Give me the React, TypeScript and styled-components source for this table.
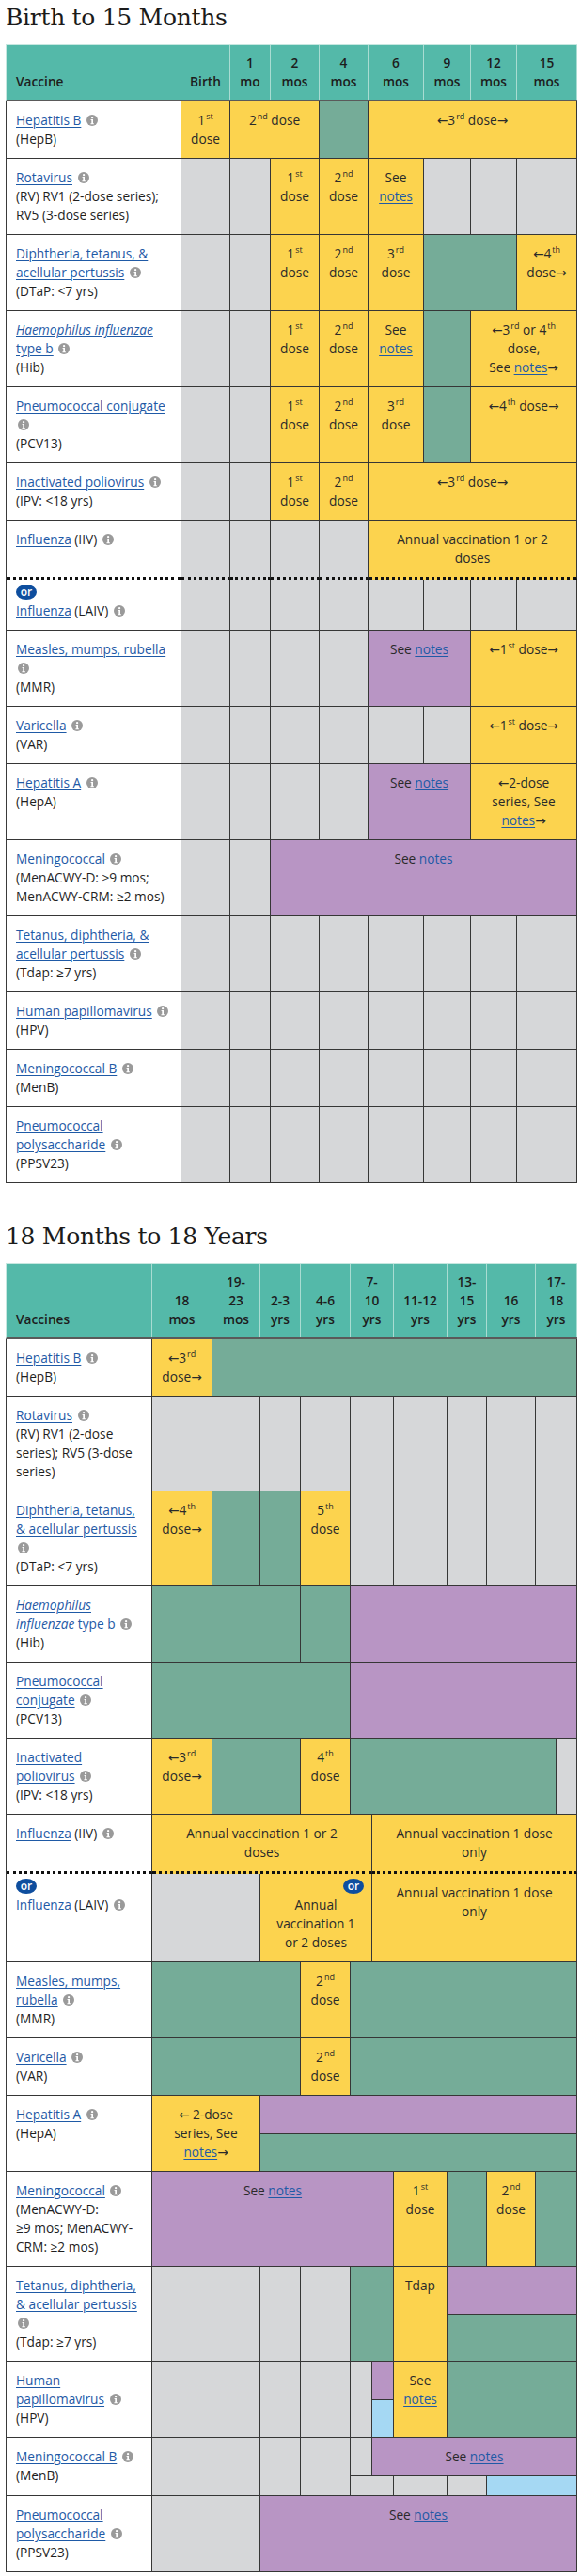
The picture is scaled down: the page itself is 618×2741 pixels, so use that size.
import React from "react";
import styled, { createGlobalStyle, css } from "styled-components";

const GlobalStyle = createGlobalStyle`
  html, body { margin: 0; padding: 0; background: #ffffff; }
  body {
    font-family: "Open Sans", "Noto Sans", "DejaVu Sans", sans-serif;
    color: #262626;
  }
  * { box-sizing: border-box; }
`;

type Tone = "white" | "yellow" | "green" | "purple" | "gray" | "blue";

const toneColor: Record<Tone, string> = {
  white: "#ffffff",
  yellow: "#fcd34e",
  green: "#75ac98",
  purple: "#b895c4",
  gray: "#d6d7d9",
  blue: "#a5d8f3",
};

const Page = styled.main`
  width: 618px;
  padding: 0 5px 8px 6px;
`;

const Section = styled.section`
  & + & {
    margin-top: 38px;
  }
`;

const Title = styled.h2`
  margin: 0 0 13px;
  padding-top: 4px;
  font-family: "DejaVu Serif", "Liberation Serif", serif;
  font-weight: 400;
  font-size: 25px;
  line-height: 30px;
  letter-spacing: -0.3px;
  color: #1b1b1b;
`;

const Table = styled.div`
  width: 608px;
  font-size: 13.7px;
  line-height: 20px;
`;

const HeadGrid = styled.div<{ $cols: string }>`
  display: grid;
  grid-template-columns: ${(p) => p.$cols};
  background: #54b9a9;
  border-top: 1px solid #c6e7e0;
  border-left: 1px solid #c6e7e0;
  border-bottom: 2px solid #5a5a5a;
`;

const HeadCell = styled.div<{ $span?: number; $left?: boolean }>`
  grid-column: span ${(p) => p.$span ?? 1};
  display: flex;
  flex-direction: column;
  justify-content: flex-end;
  padding: 9px 3px;
  text-align: center;
  font-weight: 600;
  color: #1d1d1d;
  border-right: 1px solid #a9dcd2;
  min-width: 0;
  ${(p) =>
    p.$left &&
    css`
      text-align: left;
      padding-left: 10px;
    `}
`;

const BodyGrid = styled.div<{ $cols: string }>`
  display: grid;
  grid-template-columns: ${(p) => p.$cols};
  border-left: 1px solid #3a3a3a;
`;

const Cell = styled.div<{ $tone: Tone; $span?: number; $dotted?: boolean; $tight?: boolean }>`
  grid-column: span ${(p) => p.$span ?? 1};
  min-width: 0;
  background: ${(p) => toneColor[p.$tone]};
  border-right: 1px solid #363636;
  border-bottom: ${(p) => (p.$dotted ? "3px dotted #111111" : "1px solid #363636")};
  padding: ${(p) => (p.$tight ? "3px" : "10px")} 7px 10px;
  text-align: center;
  color: #2a2a2a;
`;

const VaccineCell = styled(Cell)`
  text-align: left;
  padding-left: 10px;
  padding-right: 10px;
  color: #1f1f1f;
`;

const Split = styled.div<{ $span: number }>`
  grid-column: span ${(p) => p.$span};
  display: flex;
  flex-direction: column;
  min-width: 0;
`;

const SubRow = styled.div<{ $cols?: string; $grow?: number }>`
  display: grid;
  grid-template-columns: ${(p) => p.$cols ?? "1fr"};
  flex: ${(p) => p.$grow ?? 1} 1 0;
`;

const Sup = styled.sup`
  font-size: 9px;
  line-height: 0;
  vertical-align: 6px;
  margin-left: 1px;
`;

const Link = styled.a`
  color: #1f5aa6;
  text-decoration: underline;
  text-underline-offset: 2px;
  text-decoration-thickness: 1px;
`;

const Em = styled.em`
  font-style: italic;
`;

const InfoWrap = styled.span`
  display: inline-block;
  width: 12px;
  height: 12px;
  margin-left: 2px;
  vertical-align: -1px;

  svg {
    display: block;
  }
`;

const BadgeLine = styled.div<{ $right?: boolean }>`
  height: 20px;
  display: flex;
  align-items: center;
  justify-content: ${(p) => (p.$right ? "flex-end" : "flex-start")};
  padding-right: ${(p) => (p.$right ? "1px" : "0")};
`;

const OrBadge = styled.span`
  display: inline-flex;
  align-items: center;
  justify-content: center;
  width: 22px;
  height: 16px;
  border-radius: 50%;
  background: #0e4e9e;
  color: #ffffff;
  font-size: 12px;
  font-weight: 600;
  line-height: 1;
  padding-bottom: 1px;
`;

const InfoIcon = () => (
  <InfoWrap>
    <svg width="12" height="12" viewBox="0 0 12 12" aria-hidden="true">
      <circle cx="6" cy="6" r="6" fill="#9a9a9a" />
      <circle cx="6.1" cy="3.2" r="1.15" fill="#ffffff" />
      <path d="M4.6 5.1h2.4v4.2h0.9v0.9H4.4V9.3h0.9V6H4.6z" fill="#ffffff" />
    </svg>
  </InfoWrap>
);

const Ord = ({ n, s }: { n: string; s: string }) => (
  <>
    {n}
    <Sup>{s}</Sup>
  </>
);

const Notes = () => <Link href="#">notes</Link>;

const SeeNotes = () => (
  <>
    See <Notes />
  </>
);

type NameProps = {
  label: React.ReactNode;
  after?: string;
  abbr?: string;
  or?: boolean;
};

const Name = ({ label, after, abbr, or }: NameProps) => (
  <>
    {or && (
      <BadgeLine>
        <OrBadge>or</OrBadge>
      </BadgeLine>
    )}
    <Link href="#">{label}</Link>
    {after}{" "}
    <InfoIcon />
    {abbr && (
      <>
        <br />
        {abbr}
      </>
    )}
  </>
);

const Grays = ({ n }: { n: number }) => (
  <>
    {Array.from({ length: n }).map((_, i) => (
      <Cell key={i} $tone="gray" />
    ))}
  </>
);

const Hib = (
  <>
    <Em>Haemophilus influenzae</Em> type b
  </>
);

const MEN_ABBR = "(MenACWY-D: ≥9\u00a0mos; MenACWY-CRM: ≥2\u00a0mos)";

/* ---------------- Birth to 15 months ---------------- */

const T1 = "186px 52px 43px 52px 52px 59px 50px 49px 64px";

const EarlyTable = () => (
  <Table>
    <HeadGrid $cols={T1}>
      <HeadCell $left>Vaccine</HeadCell>
      <HeadCell>Birth</HeadCell>
      <HeadCell>1<br />mo</HeadCell>
      <HeadCell>2<br />mos</HeadCell>
      <HeadCell>4<br />mos</HeadCell>
      <HeadCell>6<br />mos</HeadCell>
      <HeadCell>9<br />mos</HeadCell>
      <HeadCell>12<br />mos</HeadCell>
      <HeadCell>15<br />mos</HeadCell>
    </HeadGrid>
    <BodyGrid $cols={T1}>
      {/* Hepatitis B */}
      <VaccineCell $tone="white"><Name label="Hepatitis B" abbr="(HepB)" /></VaccineCell>
      <Cell $tone="yellow"><Ord n="1" s="st" /> dose</Cell>
      <Cell $tone="yellow" $span={2}><Ord n="2" s="nd" /> dose</Cell>
      <Cell $tone="green" />
      <Cell $tone="yellow" $span={4}>←<Ord n="3" s="rd" /> dose→</Cell>

      {/* Rotavirus */}
      <VaccineCell $tone="white"><Name label="Rotavirus" abbr="(RV) RV1 (2-dose series); RV5 (3-dose series)" /></VaccineCell>
      <Grays n={2} />
      <Cell $tone="yellow"><Ord n="1" s="st" /> dose</Cell>
      <Cell $tone="yellow"><Ord n="2" s="nd" /> dose</Cell>
      <Cell $tone="yellow"><SeeNotes /></Cell>
      <Grays n={3} />

      {/* DTaP */}
      <VaccineCell $tone="white"><Name label="Diphtheria, tetanus, & acellular pertussis" abbr="(DTaP: <7 yrs)" /></VaccineCell>
      <Grays n={2} />
      <Cell $tone="yellow"><Ord n="1" s="st" /> dose</Cell>
      <Cell $tone="yellow"><Ord n="2" s="nd" /> dose</Cell>
      <Cell $tone="yellow"><Ord n="3" s="rd" /> dose</Cell>
      <Cell $tone="green" $span={2} />
      <Cell $tone="yellow">←<Ord n="4" s="th" /> dose→</Cell>

      {/* Hib */}
      <VaccineCell $tone="white"><Name label={Hib} abbr="(Hib)" /></VaccineCell>
      <Grays n={2} />
      <Cell $tone="yellow"><Ord n="1" s="st" /> dose</Cell>
      <Cell $tone="yellow"><Ord n="2" s="nd" /> dose</Cell>
      <Cell $tone="yellow"><SeeNotes /></Cell>
      <Cell $tone="green" />
      <Cell $tone="yellow" $span={2}>
        ←<Ord n="3" s="rd" /> or <Ord n="4" s="th" /> dose,
        <br />
        See <Notes />→
      </Cell>

      {/* PCV13 */}
      <VaccineCell $tone="white"><Name label="Pneumococcal conjugate" abbr="(PCV13)" /></VaccineCell>
      <Grays n={2} />
      <Cell $tone="yellow"><Ord n="1" s="st" /> dose</Cell>
      <Cell $tone="yellow"><Ord n="2" s="nd" /> dose</Cell>
      <Cell $tone="yellow"><Ord n="3" s="rd" /> dose</Cell>
      <Cell $tone="green" />
      <Cell $tone="yellow" $span={2}>←<Ord n="4" s="th" /> dose→</Cell>

      {/* IPV */}
      <VaccineCell $tone="white"><Name label="Inactivated poliovirus" abbr="(IPV: <18 yrs)" /></VaccineCell>
      <Grays n={2} />
      <Cell $tone="yellow"><Ord n="1" s="st" /> dose</Cell>
      <Cell $tone="yellow"><Ord n="2" s="nd" /> dose</Cell>
      <Cell $tone="yellow" $span={4}>←<Ord n="3" s="rd" /> dose→</Cell>

      {/* Influenza IIV */}
      <VaccineCell $tone="white" $dotted><Name label="Influenza" after=" (IIV)" /></VaccineCell>
      <Cell $tone="gray" $dotted />
      <Cell $tone="gray" $dotted />
      <Cell $tone="gray" $dotted />
      <Cell $tone="gray" $dotted />
      <Cell $tone="yellow" $span={4} $dotted>Annual vaccination 1 or 2<br />doses</Cell>

      {/* Influenza LAIV */}
      <VaccineCell $tone="white" $tight><Name label="Influenza" after=" (LAIV)" or /></VaccineCell>
      <Grays n={8} />

      {/* MMR */}
      <VaccineCell $tone="white"><Name label="Measles, mumps, rubella" abbr="(MMR)" /></VaccineCell>
      <Grays n={4} />
      <Cell $tone="purple" $span={2}><SeeNotes /></Cell>
      <Cell $tone="yellow" $span={2}>←<Ord n="1" s="st" /> dose→</Cell>

      {/* Varicella */}
      <VaccineCell $tone="white"><Name label="Varicella" abbr="(VAR)" /></VaccineCell>
      <Grays n={6} />
      <Cell $tone="yellow" $span={2}>←<Ord n="1" s="st" /> dose→</Cell>

      {/* Hepatitis A */}
      <VaccineCell $tone="white"><Name label="Hepatitis A" abbr="(HepA)" /></VaccineCell>
      <Grays n={4} />
      <Cell $tone="purple" $span={2}><SeeNotes /></Cell>
      <Cell $tone="yellow" $span={2}>←2-dose series, See <Notes />→</Cell>

      {/* Meningococcal */}
      <VaccineCell $tone="white"><Name label="Meningococcal" abbr={MEN_ABBR} /></VaccineCell>
      <Grays n={2} />
      <Cell $tone="purple" $span={6}><SeeNotes /></Cell>

      {/* Tdap */}
      <VaccineCell $tone="white"><Name label="Tetanus, diphtheria, & acellular pertussis" abbr="(Tdap: ≥7 yrs)" /></VaccineCell>
      <Grays n={8} />

      {/* HPV */}
      <VaccineCell $tone="white"><Name label="Human papillomavirus" abbr="(HPV)" /></VaccineCell>
      <Grays n={8} />

      {/* MenB */}
      <VaccineCell $tone="white"><Name label="Meningococcal B" abbr="(MenB)" /></VaccineCell>
      <Grays n={8} />

      {/* PPSV23 */}
      <VaccineCell $tone="white"><Name label="Pneumococcal polysaccharide" abbr="(PPSV23)" /></VaccineCell>
      <Grays n={8} />
    </BodyGrid>
  </Table>
);

/* ---------------- 18 months to 18 years ---------------- */

const T2 = "155px 64px 51px 43px 53px 23px 23px 57px 42px 52px 22px 22px";

const LaterTable = () => (
  <Table>
    <HeadGrid $cols={T2}>
      <HeadCell $left>Vaccines</HeadCell>
      <HeadCell>18<br />mos</HeadCell>
      <HeadCell>19-<br />23<br />mos</HeadCell>
      <HeadCell>2-3<br />yrs</HeadCell>
      <HeadCell>4-6<br />yrs</HeadCell>
      <HeadCell $span={2}>7-<br />10<br />yrs</HeadCell>
      <HeadCell>11-12<br />yrs</HeadCell>
      <HeadCell>13-<br />15<br />yrs</HeadCell>
      <HeadCell>16<br />yrs</HeadCell>
      <HeadCell $span={2}>17-<br />18<br />yrs</HeadCell>
    </HeadGrid>
    <BodyGrid $cols={T2}>
      {/* Hepatitis B */}
      <VaccineCell $tone="white"><Name label="Hepatitis B" abbr="(HepB)" /></VaccineCell>
      <Cell $tone="yellow">←<Ord n="3" s="rd" /> dose→</Cell>
      <Cell $tone="green" $span={10} />

      {/* Rotavirus */}
      <VaccineCell $tone="white"><Name label="Rotavirus" abbr="(RV) RV1 (2-dose series); RV5 (3-dose series)" /></VaccineCell>
      <Cell $tone="gray" $span={2} />
      <Cell $tone="gray" />
      <Cell $tone="gray" />
      <Cell $tone="gray" $span={2} />
      <Cell $tone="gray" />
      <Cell $tone="gray" />
      <Cell $tone="gray" />
      <Cell $tone="gray" $span={2} />

      {/* DTaP */}
      <VaccineCell $tone="white"><Name label="Diphtheria, tetanus, & acellular pertussis" abbr="(DTaP: <7 yrs)" /></VaccineCell>
      <Cell $tone="yellow">←<Ord n="4" s="th" /> dose→</Cell>
      <Cell $tone="green" />
      <Cell $tone="green" />
      <Cell $tone="yellow"><Ord n="5" s="th" /> dose</Cell>
      <Cell $tone="gray" $span={2} />
      <Cell $tone="gray" />
      <Cell $tone="gray" />
      <Cell $tone="gray" />
      <Cell $tone="gray" $span={2} />

      {/* Hib */}
      <VaccineCell $tone="white"><Name label={Hib} abbr="(Hib)" /></VaccineCell>
      <Cell $tone="green" $span={3} />
      <Cell $tone="green" />
      <Cell $tone="purple" $span={7} />

      {/* PCV13 */}
      <VaccineCell $tone="white"><Name label="Pneumococcal conjugate" abbr="(PCV13)" /></VaccineCell>
      <Cell $tone="green" $span={4} />
      <Cell $tone="purple" $span={7} />

      {/* IPV */}
      <VaccineCell $tone="white"><Name label="Inactivated poliovirus" abbr="(IPV: <18 yrs)" /></VaccineCell>
      <Cell $tone="yellow">←<Ord n="3" s="rd" /> dose→</Cell>
      <Cell $tone="green" $span={2} />
      <Cell $tone="yellow"><Ord n="4" s="th" /> dose</Cell>
      <Cell $tone="green" $span={6} />
      <Cell $tone="gray" />

      {/* Influenza IIV */}
      <VaccineCell $tone="white" $dotted><Name label="Influenza" after=" (IIV)" /></VaccineCell>
      <Cell $tone="yellow" $span={5} $dotted>Annual vaccination 1 or 2<br />doses</Cell>
      <Cell $tone="yellow" $span={6} $dotted>Annual vaccination 1 dose<br />only</Cell>

      {/* Influenza LAIV */}
      <VaccineCell $tone="white" $tight><Name label="Influenza" after=" (LAIV)" or /></VaccineCell>
      <Cell $tone="gray" />
      <Cell $tone="gray" />
      <Cell $tone="yellow" $span={3} $tight>
        <BadgeLine $right>
          <OrBadge>or</OrBadge>
        </BadgeLine>
        Annual
        <br />
        vaccination 1
        <br />
        or 2 doses
      </Cell>
      <Cell $tone="yellow" $span={6}>Annual vaccination 1 dose<br />only</Cell>

      {/* MMR */}
      <VaccineCell $tone="white"><Name label="Measles, mumps, rubella" abbr="(MMR)" /></VaccineCell>
      <Cell $tone="green" $span={3} />
      <Cell $tone="yellow"><Ord n="2" s="nd" /> dose</Cell>
      <Cell $tone="green" $span={7} />

      {/* Varicella */}
      <VaccineCell $tone="white"><Name label="Varicella" abbr="(VAR)" /></VaccineCell>
      <Cell $tone="green" $span={3} />
      <Cell $tone="yellow"><Ord n="2" s="nd" /> dose</Cell>
      <Cell $tone="green" $span={7} />

      {/* Hepatitis A */}
      <VaccineCell $tone="white"><Name label="Hepatitis A" abbr="(HepA)" /></VaccineCell>
      <Cell $tone="yellow" $span={2}>← 2-dose series, See <Notes />→</Cell>
      <Split $span={9}>
        <SubRow><Cell $tone="purple" /></SubRow>
        <SubRow><Cell $tone="green" /></SubRow>
      </Split>

      {/* Meningococcal */}
      <VaccineCell $tone="white"><Name label="Meningococcal" abbr={MEN_ABBR} /></VaccineCell>
      <Cell $tone="purple" $span={6}><SeeNotes /></Cell>
      <Cell $tone="yellow"><Ord n="1" s="st" /> dose</Cell>
      <Cell $tone="green" />
      <Cell $tone="yellow"><Ord n="2" s="nd" /> dose</Cell>
      <Cell $tone="green" $span={2} />

      {/* Tdap */}
      <VaccineCell $tone="white"><Name label="Tetanus, diphtheria, & acellular pertussis" abbr="(Tdap: ≥7 yrs)" /></VaccineCell>
      <Grays n={4} />
      <Cell $tone="green" $span={2} />
      <Cell $tone="yellow">Tdap</Cell>
      <Split $span={4}>
        <SubRow><Cell $tone="purple" /></SubRow>
        <SubRow><Cell $tone="green" /></SubRow>
      </Split>

      {/* HPV */}
      <VaccineCell $tone="white"><Name label="Human papillomavirus" abbr="(HPV)" /></VaccineCell>
      <Grays n={5} />
      <Split $span={1}>
        <SubRow><Cell $tone="purple" /></SubRow>
        <SubRow><Cell $tone="blue" /></SubRow>
      </Split>
      <Cell $tone="yellow"><SeeNotes /></Cell>
      <Cell $tone="green" $span={4} />

      {/* MenB */}
      <VaccineCell $tone="white"><Name label="Meningococcal B" abbr="(MenB)" /></VaccineCell>
      <Grays n={4} />
      <Split $span={7}>
        <SubRow $cols="23px 1fr" $grow={2}>
          <Cell $tone="gray" />
          <Cell $tone="purple"><SeeNotes /></Cell>
        </SubRow>
        <SubRow $cols="46px 57px 42px 1fr" $grow={1}>
          <Cell $tone="gray" />
          <Cell $tone="gray" />
          <Cell $tone="gray" />
          <Cell $tone="blue" />
        </SubRow>
      </Split>

      {/* PPSV23 */}
      <VaccineCell $tone="white"><Name label="Pneumococcal polysaccharide" abbr="(PPSV23)" /></VaccineCell>
      <Cell $tone="gray" />
      <Cell $tone="gray" />
      <Cell $tone="purple" $span={9}><SeeNotes /></Cell>
    </BodyGrid>
  </Table>
);

export default function App() {
  return (
    <>
      <GlobalStyle />
      <Page>
        <Section>
          <Title>Birth to 15 Months</Title>
          <EarlyTable />
        </Section>
        <Section>
          <Title>18 Months to 18 Years</Title>
          <LaterTable />
        </Section>
      </Page>
    </>
  );
}
